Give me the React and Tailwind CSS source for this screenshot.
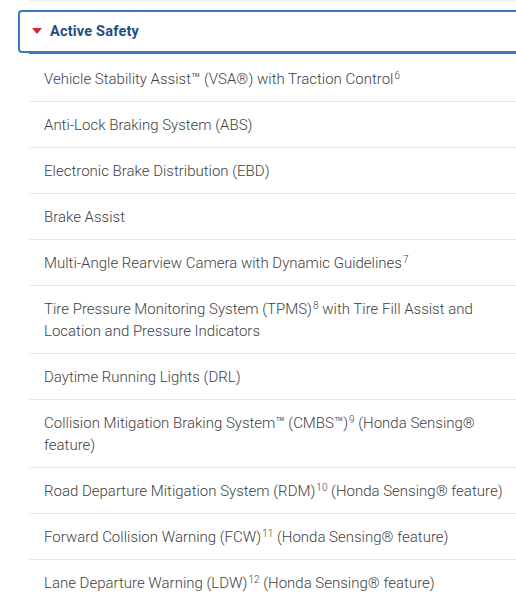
import React from "react";

const items = [
  ["Vehicle Stability Assist™ (VSA®) with Traction Control", "6", ""],
  ["Anti-Lock Braking System (ABS)"],
  ["Electronic Brake Distribution (EBD)"],
  ["Brake Assist"],
  ["Multi-Angle Rearview Camera with Dynamic Guidelines", "7", ""],
  ["Tire Pressure Monitoring System (TPMS)", "8", " with Tire Fill Assist and Location and Pressure Indicators"],
  ["Daytime Running Lights (DRL)"],
  ["Collision Mitigation Braking System™ (CMBS™)", "9", " (Honda Sensing® feature)"],
  ["Road Departure Mitigation System (RDM)", "10", " (Honda Sensing® feature)"],
  ["Forward Collision Warning (FCW)", "11", " (Honda Sensing® feature)"],
  ["Lane Departure Warning (LDW)", "12", " (Honda Sensing® feature)"],
];

export default function App() {
  return (
    <div
      className="w-[516px] h-[600px] overflow-hidden bg-white"
      style={{ fontFamily: "Roboto, 'Liberation Sans', sans-serif" }}
    >
      <div className="h-[2px] ml-[29px] bg-[#f3f3f3]" />
      <div className="w-[560px] pl-[18px] pt-[8px]">
        {/* header */}
        <div className="h-[43px] flex items-center border-2 border-[#3b78c2] rounded-l-[4px] pl-[12px] gap-[8px] relative z-10">
          <svg width="10" height="7" viewBox="0 0 10 7">
            <path d="M0 0 L10 0 L5 6 Z" fill="#d3262e" />
          </svg>
          <span className="text-[14.5px] font-bold text-[#1f4f7c] tracking-[0.2px]">Active Safety</span>
        </div>
        <div className="ml-[11px] border-t-2 border-[#c9434b] -mt-[1px] pt-[2px]">
          {items.map(([a, sup, b], i) => (
            <div
              key={i}
              className="pl-[15px] pr-[36px] pt-[12px] pb-[11px] border-b border-[#e8e8e8] text-[15px] font-light leading-[22px] text-[#3f3f3f]"
            >
              {a}
              {sup && <sup className="text-[10px] ml-[1px]">{sup}</sup>}
              {b}
            </div>
          ))}
        </div>
      </div>
    </div>
  );
}
